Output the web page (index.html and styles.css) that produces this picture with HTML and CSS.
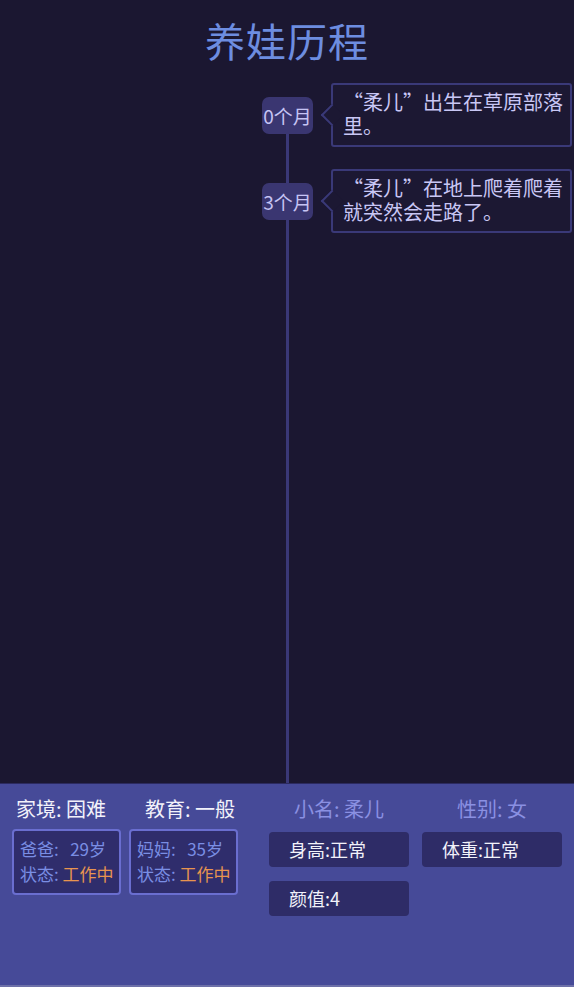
FILE: index.html
```html
<!DOCTYPE html>
<html lang="zh-CN">
  <head>
    <meta charset="utf-8" />
    <meta name="viewport" content="width=device-width, initial-scale=1.0" />
    <title>养娃历程</title>
    <link rel="stylesheet" href="styles.css">
  </head>
  <body>
    <div class="page">
      <h1 class="title">养娃历程</h1>

      <!-- 成长时间线 -->
      <div class="timeline">
        <div class="event">
          <div class="age">0个月</div>
          <div class="bubble">“柔儿”出生在草原部落里。</div>
        </div>
        <div class="event">
          <div class="age">3个月</div>
          <div class="bubble">“柔儿”在地上爬着爬着就突然会走路了。</div>
        </div>
      </div>

      <!-- 家庭和孩子信息 -->
      <div class="panel">
        <div class="family">
          <div class="family-labels">
            <span>家境: 困难</span>
            <span>教育: 一般</span>
          </div>
          <div class="parents">
            <div class="parent">
              <p>爸爸:&nbsp;&nbsp; 29岁</p>
              <p>状态: <span class="status">工作中</span></p>
            </div>
            <div class="parent">
              <p>妈妈:&nbsp;&nbsp; 35岁</p>
              <p>状态: <span class="status">工作中</span></p>
            </div>
          </div>
        </div>
        <div class="child">
          <div class="child-label">小名: 柔儿</div>
          <div class="child-label">性别: 女</div>
          <div class="chip">身高:正常</div>
          <div class="chip">体重:正常</div>
          <div class="chip">颜值:4</div>
        </div>
      </div>
    </div>
  </body>
</html>
```

FILE: styles.css
```css
* {
  padding: 0;
  margin: 0;
  box-sizing: border-box;
  font-family: "Noto Sans CJK SC", "Noto Sans", sans-serif;
}
body {
  background-color: #1b1731;
}
.page {
  height: 987px;
  display: flex;
  flex-direction: column;
}
.title {
  height: 83px;
  padding-top: 13px;
  font-size: 40px;
  font-weight: 400;
  line-height: 54px;
  text-align: center;
  color: #6d8de0;
  letter-spacing: 1px;
}

/* timeline */
.timeline {
  flex: 1;
  display: flex;
  flex-direction: column;
  gap: 22px;
  background: linear-gradient(#3a3877, #3a3877) no-repeat 286px 40px / 3px 100%;
}
.event {
  display: flex;
  align-items: center;
  padding-left: 262px;
}
.age {
  width: 51px;
  height: 37px;
  flex-shrink: 0;
  background-color: #3a3671;
  border-radius: 7px;
  color: #c6c4f4;
  font-size: 19px;
  line-height: 37px;
  text-align: center;
  white-space: nowrap;
}
.bubble {
  position: relative;
  width: 241px;
  margin-left: 18px;
  padding: 5px 4px 7px 10px;
  border: 2px solid #3a3978;
  border-radius: 3px;
  background-color: #1c1833;
  color: #c9c7f5;
  font-size: 20px;
  line-height: 24px;
}
.bubble::before {
  content: "";
  position: absolute;
  left: -9px;
  top: 50%;
  width: 14px;
  height: 14px;
  margin-top: -8px;
  border-left: 2px solid #3a3978;
  border-bottom: 2px solid #3a3978;
  background-color: #1c1833;
  transform: rotate(45deg);
}

/* bottom panel */
.panel {
  height: 204px;
  display: flex;
  padding: 12px 0 0 12px;
  background-color: #464a98;
  border-top: 1px solid #2c2b60;
  border-bottom: 2px solid #6d70a8;
}
.family {
  width: 257px;
}
.family-labels {
  display: flex;
  gap: 39px;
  padding-left: 4px;
  color: #f2f2fa;
  font-size: 20px;
  line-height: 25px;
}
.parents {
  display: flex;
  gap: 8px;
  margin-top: 8px;
}
.parent {
  width: 109px;
  height: 66px;
  padding: 5px 0 0 6px;
  border: 2px solid #6a6ed0;
  border-radius: 4px;
  background-color: #2f2d6c;
  color: #7a8ee4;
  font-size: 17px;
  line-height: 25px;
  white-space: nowrap;
}
.status {
  color: #e8944f;
}
.child {
  display: grid;
  grid-template-columns: 140px 140px;
  column-gap: 13px;
  row-gap: 14px;
  align-content: start;
}
.child-label {
  margin-bottom: -3px;
  color: #8a90e2;
  font-size: 20px;
  line-height: 25px;
  text-align: center;
}
.chip {
  height: 35px;
  padding-left: 20px;
  border-radius: 4px;
  background-color: #2e2c67;
  color: #f2f2fa;
  font-size: 18px;
  line-height: 35px;
}
```
